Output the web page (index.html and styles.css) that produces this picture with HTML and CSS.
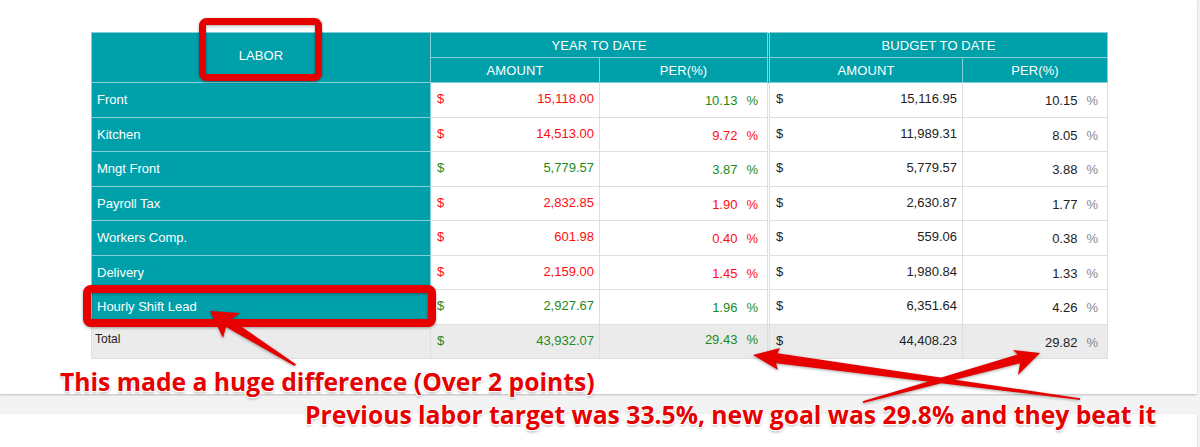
FILE: index.html
```html
<!DOCTYPE html>
<html>
<head>
<meta charset="utf-8">
<link rel="stylesheet" href="styles.css">
</head>
<body>
<div class="card card-top">
  <table class="labor">
    <colgroup>
      <col class="c-name"><col class="c-amt1"><col class="c-per1"><col class="c-amt2"><col class="c-per2">
    </colgroup>
    <thead>
      <tr>
        <th rowspan="2" class="lab-h">LABOR</th>
        <th colspan="2">YEAR TO DATE</th>
        <th colspan="2" class="sep">BUDGET TO DATE</th>
      </tr>
      <tr>
        <th>AMOUNT</th><th>PER(%)</th><th class="sep">AMOUNT</th><th>PER(%)</th>
      </tr>
    </thead>
    <tbody>
      <tr>
        <td class="name">Front</td>
        <td class="red"><div class="amt"><span>$</span><span>15,118.00</span></div></td>
        <td class="green"><div class="per"><span>10.13</span><span class="pc">%</span></div></td>
        <td class="sep bud"><div class="amt"><span>$</span><span>15,116.95</span></div></td>
        <td class="bud"><div class="per"><span>10.15</span><span class="pc grey">%</span></div></td>
      </tr>
      <tr>
        <td class="name">Kitchen</td>
        <td class="red"><div class="amt"><span>$</span><span>14,513.00</span></div></td>
        <td class="red"><div class="per"><span>9.72</span><span class="pc">%</span></div></td>
        <td class="sep bud"><div class="amt"><span>$</span><span>11,989.31</span></div></td>
        <td class="bud"><div class="per"><span>8.05</span><span class="pc grey">%</span></div></td>
      </tr>
      <tr>
        <td class="name">Mngt Front</td>
        <td class="green"><div class="amt"><span>$</span><span>5,779.57</span></div></td>
        <td class="green"><div class="per"><span>3.87</span><span class="pc">%</span></div></td>
        <td class="sep bud"><div class="amt"><span>$</span><span>5,779.57</span></div></td>
        <td class="bud"><div class="per"><span>3.88</span><span class="pc grey">%</span></div></td>
      </tr>
      <tr>
        <td class="name">Payroll Tax</td>
        <td class="red"><div class="amt"><span>$</span><span>2,832.85</span></div></td>
        <td class="red"><div class="per"><span>1.90</span><span class="pc">%</span></div></td>
        <td class="sep bud"><div class="amt"><span>$</span><span>2,630.87</span></div></td>
        <td class="bud"><div class="per"><span>1.77</span><span class="pc grey">%</span></div></td>
      </tr>
      <tr>
        <td class="name">Workers Comp.</td>
        <td class="red"><div class="amt"><span>$</span><span>601.98</span></div></td>
        <td class="red"><div class="per"><span>0.40</span><span class="pc">%</span></div></td>
        <td class="sep bud"><div class="amt"><span>$</span><span>559.06</span></div></td>
        <td class="bud"><div class="per"><span>0.38</span><span class="pc grey">%</span></div></td>
      </tr>
      <tr>
        <td class="name">Delivery</td>
        <td class="red"><div class="amt"><span>$</span><span>2,159.00</span></div></td>
        <td class="red"><div class="per"><span>1.45</span><span class="pc">%</span></div></td>
        <td class="sep bud"><div class="amt"><span>$</span><span>1,980.84</span></div></td>
        <td class="bud"><div class="per"><span>1.33</span><span class="pc grey">%</span></div></td>
      </tr>
      <tr>
        <td class="name">Hourly Shift Lead</td>
        <td class="green"><div class="amt"><span>$</span><span>2,927.67</span></div></td>
        <td class="green"><div class="per"><span>1.96</span><span class="pc">%</span></div></td>
        <td class="sep bud"><div class="amt"><span>$</span><span>6,351.64</span></div></td>
        <td class="bud"><div class="per"><span>4.26</span><span class="pc grey">%</span></div></td>
      </tr>
      <tr class="total">
        <td class="tname">Total</td>
        <td class="green"><div class="amt"><span>$</span><span>43,932.07</span></div></td>
        <td class="green tper"><div class="per"><span>29.43</span><span class="pc">%</span></div></td>
        <td class="sep bud"><div class="amt"><span>$</span><span>44,408.23</span></div></td>
        <td class="bud"><div class="per"><span>29.82</span><span class="pc grey">%</span></div></td>
      </tr>
    </tbody>
  </table>
</div>
<div class="card card-bottom"></div>

<svg class="marks" width="1200" height="447" viewBox="0 0 1200 447">
  <rect x="202.5" y="21.5" width="116" height="56" rx="4" class="box" stroke-width="7"/>
  <rect x="87" y="289" width="345" height="34" rx="4" class="box" stroke-width="8"/>
  <polygon class="arrow" points="210,311 240,313 231,319.5 296,364.3 294.6,366 226,327 223,338"/>
  <polygon class="arrow" points="753,355 780,348 777.5,353.2 1080,398.3 1080,400 776.1,363.2 778,370"/>
  <polygon class="arrow" points="1040,353 1013,350 1017.6,354.6 862.7,401.3 863.3,403 1020,363.2 1018,375"/>
</svg>
<div class="note note-1">This made a huge difference (Over 2 points)</div>
<div class="note note-2">Previous labor target was 33.5%, new goal was 29.8% and they beat it</div>
</body>
</html>
```
FILE: styles.css
```css
html, body {
  margin: 0;
  padding: 0;
}
body {
  background: #f3f3f3;
  width: 1200px;
  height: 447px;
  overflow: hidden;
  position: relative;
  font-family: "Liberation Sans", Arial, sans-serif;
}
.card {
  background: #fff;
  width: 1197px;
  box-shadow: 0 1px 2px rgba(0,0,0,0.22);
}
.card-top {
  height: 394px;
  padding: 32px 0 0 91px;
  box-sizing: border-box;
}
.card-bottom {
  margin-top: 20px;
  height: 33px;
}
.labor {
  border-collapse: collapse;
  table-layout: fixed;
  width: 1016px;
  font-size: 13px;
}
.c-name { width: 339px; }
.c-amt1 { width: 169px; }
.c-per1 { width: 169px; }
.c-amt2 { width: 194px; }
.c-per2 { width: 145px; }

.labor th {
  background: #00a0aa;
  color: #fff;
  font-weight: normal;
  height: 24px;
  padding: 0;
  text-align: center;
  border: 1px solid #84d0d5;
  letter-spacing: 0.1px;
}
.labor th.lab-h { padding-bottom: 4px; }
.labor th.sep { border-left: 3px double #84d0d5; }

.labor td {
  height: 33.5px;
  padding: 0;
  border: 1px solid #dedede;
  vertical-align: middle;
}
.labor td.sep { border-left: 3px double #dedede; }
.labor td.name {
  background: #00a0aa;
  color: #fff;
  padding-left: 5px;
  border-color: #84d0d5;
}
.total td { background: #ebebeb; }
.labor td.tname {
  color: #222;
  padding: 7px 0 0 3px;
  height: 26.5px;
  vertical-align: top;
  font-size: 12px;
}
.amt {
  display: flex;
  justify-content: space-between;
  padding: 0 5px 2px 6px;
}
.per {
  display: flex;
  justify-content: flex-end;
  gap: 9px;
  padding: 2px 9px 0 0;
}
.tper .per { padding-top: 0; padding-bottom: 3px; }
.red { color: #ff0d0d; }
.green { color: #1c8a1c; }
.bud { color: #222; }
.pc.grey { color: #888; }

.marks {
  position: absolute;
  left: 0;
  top: 0;
  filter: drop-shadow(0 1px 1.5px rgba(0,0,0,0.35));
}
.box {
  fill: none;
  stroke: #e60000;
}
.arrow {
  fill: #e60000;
}
.note {
  position: absolute;
  font-family: "Open Sans", sans-serif;
  font-weight: 700;
  font-size: 24.7px;
  line-height: 32px;
  color: #e60000;
  white-space: nowrap;
  text-shadow: 0 0 2px #fff, 0 0 2px #fff, 1px 1px 1px #fff, -1px -1px 1px #fff, 1px -1px 1px #fff, -1px 1px 1px #fff, 0 2px 3px rgba(0,0,0,0.35);
}
.note-1 { left: 60px; top: 366px; }
.note-2 { left: 305px; top: 399px; }
```
